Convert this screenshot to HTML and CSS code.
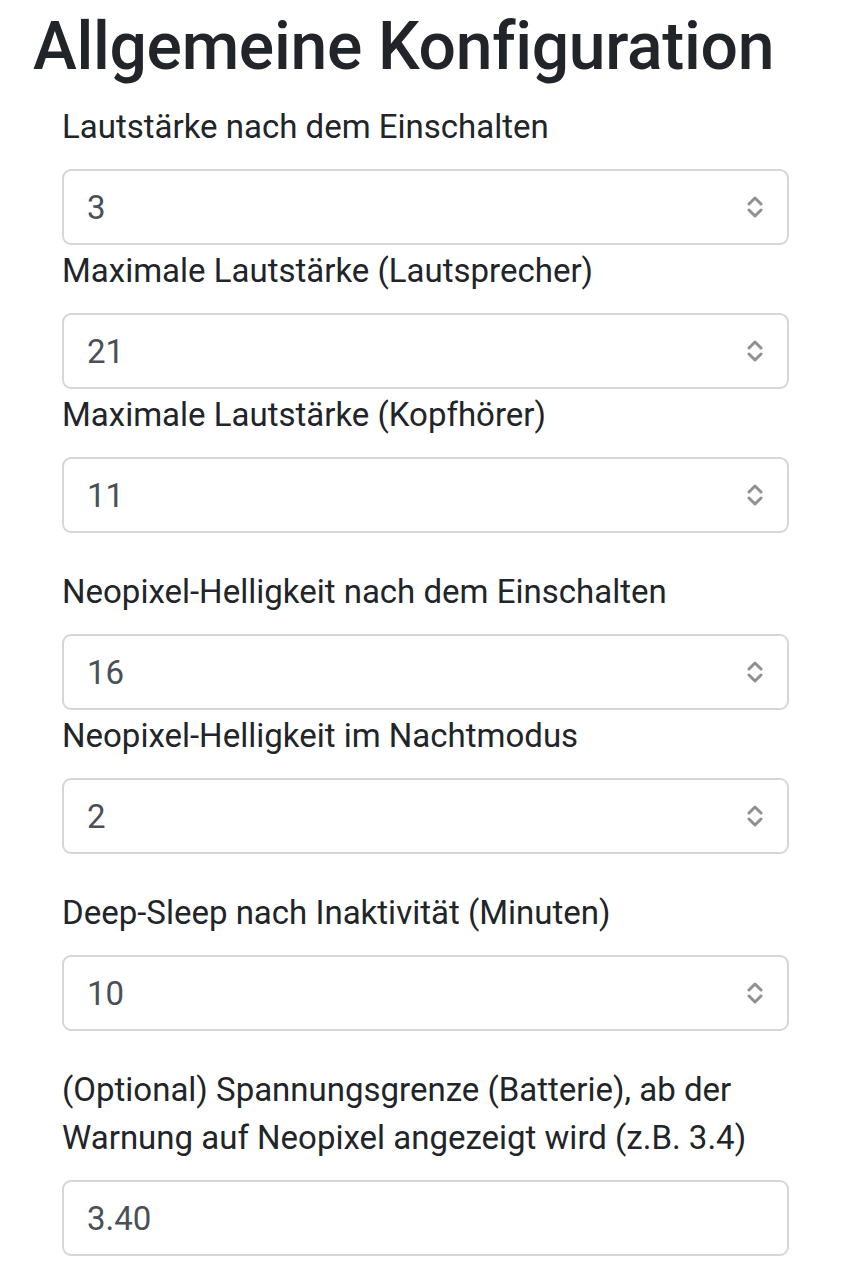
FILE: index.html
```html
<!DOCTYPE html>
<html lang="de">
<head>
<meta charset="utf-8">
<link rel="stylesheet" href="styles.css">
<title>Allgemeine Konfiguration</title>
</head>
<body>
<div class="page">
  <h1 class="title">Allgemeine Konfiguration</h1>
  <form class="form">
    <div class="group">
      <label class="label">Lautstärke nach dem Einschalten</label>
      <div class="select"><span class="value">3</span><svg class="chev" viewBox="0 0 16 24" width="16" height="24"><path d="M2 9 L8 3 L14 9 M2 15 L8 21 L14 15" fill="none" stroke="#8e9095" stroke-width="3" stroke-linecap="round" stroke-linejoin="round"/></svg></div>
    </div>
    <div class="group">
      <label class="label">Maximale Lautstärke (Lautsprecher)</label>
      <div class="select"><span class="value">21</span><svg class="chev" viewBox="0 0 16 24" width="16" height="24"><path d="M2 9 L8 3 L14 9 M2 15 L8 21 L14 15" fill="none" stroke="#8e9095" stroke-width="3" stroke-linecap="round" stroke-linejoin="round"/></svg></div>
    </div>
    <div class="group spaced">
      <label class="label">Maximale Lautstärke (Kopfhörer)</label>
      <div class="select"><span class="value">11</span><svg class="chev" viewBox="0 0 16 24" width="16" height="24"><path d="M2 9 L8 3 L14 9 M2 15 L8 21 L14 15" fill="none" stroke="#8e9095" stroke-width="3" stroke-linecap="round" stroke-linejoin="round"/></svg></div>
    </div>
    <div class="group">
      <label class="label">Neopixel-Helligkeit nach dem Einschalten</label>
      <div class="select"><span class="value">16</span><svg class="chev" viewBox="0 0 16 24" width="16" height="24"><path d="M2 9 L8 3 L14 9 M2 15 L8 21 L14 15" fill="none" stroke="#8e9095" stroke-width="3" stroke-linecap="round" stroke-linejoin="round"/></svg></div>
    </div>
    <div class="group spaced">
      <label class="label">Neopixel-Helligkeit im Nachtmodus</label>
      <div class="select"><span class="value">2</span><svg class="chev" viewBox="0 0 16 24" width="16" height="24"><path d="M2 9 L8 3 L14 9 M2 15 L8 21 L14 15" fill="none" stroke="#8e9095" stroke-width="3" stroke-linecap="round" stroke-linejoin="round"/></svg></div>
    </div>
    <div class="group spaced">
      <label class="label">Deep-Sleep nach Inaktivität (Minuten)</label>
      <div class="select"><span class="value">10</span><svg class="chev" viewBox="0 0 16 24" width="16" height="24"><path d="M2 9 L8 3 L14 9 M2 15 L8 21 L14 15" fill="none" stroke="#8e9095" stroke-width="3" stroke-linecap="round" stroke-linejoin="round"/></svg></div>
    </div>
    <div class="group">
      <label class="label">(Optional) Spannungsgrenze (Batterie), ab der Warnung auf Neopixel angezeigt wird (z.B. 3.4)</label>
      <div class="select"><span class="value">3.40</span></div>
    </div>
  </form>
</div>
</body>
</html>
```
FILE: styles.css
```css
* { box-sizing: border-box; }
html, body { margin: 0; padding: 0; background: #fff; }
body {
  font-family: Roboto, "Noto Sans", "Liberation Sans", sans-serif;
  color: #212529;
}
.page {
  padding: 7px 0 0 33px;
  width: 851px;
}
.title {
  margin: 0;
  font-size: 66px;
  font-weight: 500;
  line-height: 80px;
  letter-spacing: -0.3px;
}
.form {
  display: flex;
  flex-direction: column;
  padding: 16px 62px 0 29px;
}
.group {
  display: flex;
  flex-direction: column;
  margin-bottom: 2px;
}
.group.spaced { margin-bottom: 35px; }
.label {
  font-size: 33px;
  line-height: 48px;
  margin-bottom: 18px;
}
.select {
  height: 76px;
  border: 2px solid #d4d6d9;
  border-radius: 9px;
  display: flex;
  align-items: center;
  justify-content: space-between;
  padding: 0 24px 0 23px;
  color: #495057;
  font-size: 33px;
}
.chev { display: block; }
```
